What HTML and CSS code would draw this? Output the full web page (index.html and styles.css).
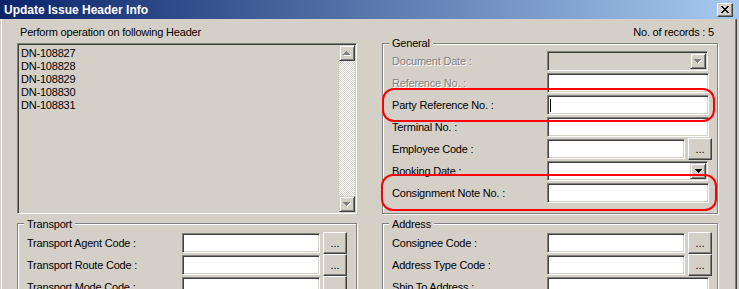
FILE: index.html
```html
<!DOCTYPE html>
<html lang="en">
<head>
  <meta charset="UTF-8">
  <title>Update Issue Header Info</title>
  <link rel="stylesheet" href="styles.css">
</head>
<body>
<div class="window">
  <div class="titlebar">
    <span class="title">Update Issue Header Info</span>
    <div class="close">
      <svg width="8" height="7" viewBox="0 0 8 7"><path d="M0 0h2v1H0zM6 0h2v1H6zM1 1h2v1H1zM5 1h2v1H5zM2 2h4v1H2zM3 3h2v1H3zM2 4h4v1H2zM1 5h2v1H1zM5 5h2v1H5zM0 6h2v1H0zM6 6h2v1H6z" fill="#000"/></svg>
    </div>
  </div>

  <div class="content">
    <div class="col">
      <div class="caption">Perform operation on following Header</div>
      <div class="listbox">
        <div class="items">
          <div>DN-108827</div>
          <div>DN-108828</div>
          <div>DN-108829</div>
          <div>DN-108830</div>
          <div>DN-108831</div>
        </div>
        <div class="vscroll">
          <div class="sbtn">
            <svg class="arrow off" width="8" height="5" viewBox="0 0 8 5"><path d="M3 0h1v1H3zM2 1h3v1H2zM1 2h5v1H1zM0 3h7v1H0z" fill="#fff" transform="translate(1 1)"/><path d="M3 0h1v1H3zM2 1h3v1H2zM1 2h5v1H1zM0 3h7v1H0z" fill="#808080"/></svg>
          </div>
          <div class="sbtn">
            <svg class="arrow off" width="8" height="5" viewBox="0 0 8 5"><path d="M0 0h7v1H0zM1 1h5v1H1zM2 2h3v1H2zM3 3h1v1H3z" fill="#fff" transform="translate(1 1)"/><path d="M0 0h7v1H0zM1 1h5v1H1zM2 2h3v1H2zM3 3h1v1H3z" fill="#808080"/></svg>
          </div>
        </div>
      </div>

      <fieldset class="group transport">
        <legend>Transport</legend>
        <div class="row"><label>Transport Agent Code :</label><div class="field short"></div><div class="dots">...</div></div>
        <div class="row"><label>Transport Route Code :</label><div class="field short"></div><div class="dots">...</div></div>
        <div class="row"><label>Transport Mode Code :</label><div class="field short"></div><div class="dots">...</div></div>
      </fieldset>
    </div>

    <div class="col">
      <div class="records">No. of records : 5</div>

      <fieldset class="group general">
        <legend>General</legend>
        <div class="row"><label class="disabled">Document Date :</label>
          <div class="field combo off">
            <div class="drop">
              <svg width="8" height="5" viewBox="0 0 8 5"><path d="M0 0h7v1H0zM1 1h5v1H1zM2 2h3v1H2zM3 3h1v1H3z" fill="#fff" transform="translate(1 1)"/><path d="M0 0h7v1H0zM1 1h5v1H1zM2 2h3v1H2zM3 3h1v1H3z" fill="#808080"/></svg>
            </div>
          </div>
        </div>
        <div class="row"><label class="disabled">Reference No. :</label><div class="field"></div></div>
        <div class="row"><label>Party Reference No. :</label><div class="field"><span class="caret"></span></div></div>
        <div class="row"><label>Terminal No. :</label><div class="field"></div></div>
        <div class="row"><label>Employee Code :</label><div class="field short"></div><div class="dots">...</div></div>
        <div class="row"><label>Booking Date :</label>
          <div class="field combo">
            <div class="drop">
              <svg width="7" height="4" viewBox="0 0 7 4"><path d="M0 0h7v1H0zM1 1h5v1H1zM2 2h3v1H2zM3 3h1v1H3z" fill="#000"/></svg>
            </div>
          </div>
        </div>
        <div class="row"><label>Consignment Note No. :</label><div class="field"></div></div>
      </fieldset>

      <fieldset class="group address">
        <legend>Address</legend>
        <div class="row"><label>Consignee Code :</label><div class="field short"></div><div class="dots">...</div></div>
        <div class="row"><label>Address Type Code :</label><div class="field short"></div><div class="dots">...</div></div>
        <div class="row"><label>Ship To Address :</label><div class="field"></div></div>
      </fieldset>
    </div>
  </div>

  <!-- highlight marks drawn over the form -->
  <div class="mark mark-party"></div>
  <div class="mark mark-consign"></div>
</div>
</body>
</html>
```

FILE: styles.css
```css
body {
  margin: 0;
  background-color: #d4d0c8;
  font-family: "Liberation Sans", Arial, sans-serif;
  font-size: 11px;
  letter-spacing: -0.2px;
  color: #000;
}

.window {
  position: relative;
  width: 739px;
  height: 289px;
  overflow: hidden;
  background-color: #d4d0c8;
  box-shadow: inset 1px 0 #d4d0c8, inset 2px 0 #fff,
    inset -2px 0 #d4d0c8, inset -3px 0 #404040, inset -4px 0 #808080;
}

.titlebar {
  height: 19px;
  display: flex;
  align-items: center;
  justify-content: space-between;
  padding: 0 6px 0 4px;
  background: linear-gradient(to right, #0a246a, #a6caf0);
  color: #fff;
  font-size: 12px;
  font-weight: bold;
  letter-spacing: 0;
}

.close {
  width: 16px;
  height: 14px;
  box-sizing: border-box;
  display: flex;
  align-items: center;
  justify-content: center;
  background-color: #d4d0c8;
  border: 1px solid;
  border-color: #fff #404040 #404040 #fff;
  box-shadow: inset -1px -1px #808080;
}

.content {
  display: grid;
  grid-template-columns: 340px 336px;
  column-gap: 25px;
  padding: 7px 0 0 17px;
}

.col {
  display: flex;
  flex-direction: column;
}

.caption {
  line-height: 13px;
  padding-left: 3px;
}

.records {
  line-height: 13px;
  text-align: right;
  padding-right: 4px;
}

.listbox {
  margin-top: 4px;
  height: 171px;
  box-sizing: border-box;
  display: flex;
  padding: 1px;
  border: 1px solid;
  border-color: #808080 #fff #fff #808080;
  box-shadow: inset 1px 1px #404040, inset -1px -1px #d4d0c8;
}

.items {
  flex: 1;
  padding: 2px 0 0 2px;
  line-height: 13px;
}

.vscroll {
  width: 16px;
  display: flex;
  flex-direction: column;
  justify-content: space-between;
  background: repeating-conic-gradient(#fff 0 25%, #d4d0c8 0 50%) 0 0 / 2px 2px;
}

.sbtn {
  width: 16px;
  height: 16px;
  box-sizing: border-box;
  display: flex;
  align-items: center;
  justify-content: center;
  background-color: #d4d0c8;
  border: 1px solid;
  border-color: #d4d0c8 #404040 #404040 #d4d0c8;
  box-shadow: inset 1px 1px #fff, inset -1px -1px #808080;
}

.group {
  margin: 2px 0 0;
  padding: 1px 0 0 9px;
  min-width: 0;
  border: 1px solid #808080;
  box-shadow: inset 1px 1px #fff, 1px 1px #fff;
}

.group legend {
  margin-left: -3px;
  padding: 2px 3px 0;
  line-height: 13px;
  background-color: #d4d0c8;
}

.general {
  margin-top: -2px;
  padding-top: 0;
  padding-bottom: 9px;
}

.general legend {
  padding-top: 0;
}

.row {
  display: flex;
  align-items: center;
  height: 22px;
}

.row label {
  width: 155px;
  flex: none;
  white-space: nowrap;
}

.disabled {
  color: #808080;
  text-shadow: 1px 1px #fff;
}

.field {
  width: 162px;
  height: 20px;
  box-sizing: border-box;
  flex: none;
  display: flex;
  align-items: center;
  background-color: #fff;
  border: 1px solid;
  border-color: #808080 #fff #fff #808080;
  box-shadow: inset 1px 1px #404040, inset -1px -1px #d4d0c8;
}

.field.short {
  width: 138px;
}

.caret {
  width: 1px;
  height: 13px;
  margin-left: 2px;
  background-color: #000;
}

.combo {
  justify-content: flex-end;
  padding: 1px;
  width: 161px;
}

.combo.off {
  background-color: #d4d0c8;
}

.drop {
  width: 16px;
  height: 16px;
  box-sizing: border-box;
  display: flex;
  align-items: center;
  justify-content: center;
  background-color: #d4d0c8;
  border: 1px solid;
  border-color: #d4d0c8 #404040 #404040 #d4d0c8;
  box-shadow: inset 1px 1px #fff, inset -1px -1px #808080;
}

.dots {
  width: 24px;
  height: 22px;
  box-sizing: border-box;
  margin-left: 3px;
  display: flex;
  align-items: flex-end;
  justify-content: center;
  padding-bottom: 4px;
  line-height: 11px;
  letter-spacing: 0;
  background-color: #d4d0c8;
  border: 1px solid;
  border-color: #fff #404040 #404040 #fff;
  box-shadow: inset -1px -1px #808080;
}

.mark {
  position: absolute;
  box-sizing: border-box;
  border: 2px solid #f00;
  border-radius: 12px;
}

.mark-party {
  left: 382px;
  top: 88px;
  width: 333px;
  height: 34px;
}

.mark-consign {
  left: 381px;
  top: 174px;
  width: 336px;
  height: 37px;
}
```
